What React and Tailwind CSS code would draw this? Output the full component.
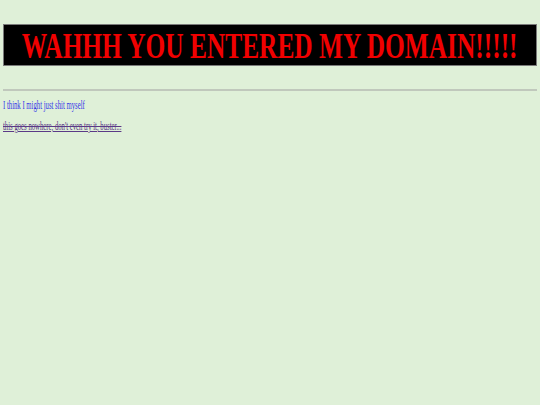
export default function App() {
  return (
    <div className="min-h-screen bg-[#dff0d8] px-[3px] pt-[24px] font-['Liberation_Serif',serif]">
      {/* banner */}
      <div className="h-[42px] border border-[#7a7a7a] bg-black flex items-center justify-center overflow-hidden">
        <h1 className="whitespace-nowrap text-[36px] leading-none font-bold text-[#f00000] scale-x-[0.705] pt-[2px]">
          WAHHH YOU ENTERED MY DOMAIN!!!!!
        </h1>
      </div>

      <hr className="mt-[23px] border-t-2 border-[#c0c8bc]" />

      <div className="origin-left scale-x-[0.56] w-[200px]">
        <p className="mt-[7px] text-[12px] leading-[14px] text-[#3434e8] whitespace-nowrap">
          I think I might just shit myself
        </p>
        <p className="mt-[7px] text-[12px] leading-[14px] whitespace-nowrap">
          <a href="#" className="text-[#5b3a87] [text-decoration-line:underline_line-through]">
            this goes nowhere, don't even try it, buster...
          </a>
        </p>
      </div>
    </div>
  );
}
